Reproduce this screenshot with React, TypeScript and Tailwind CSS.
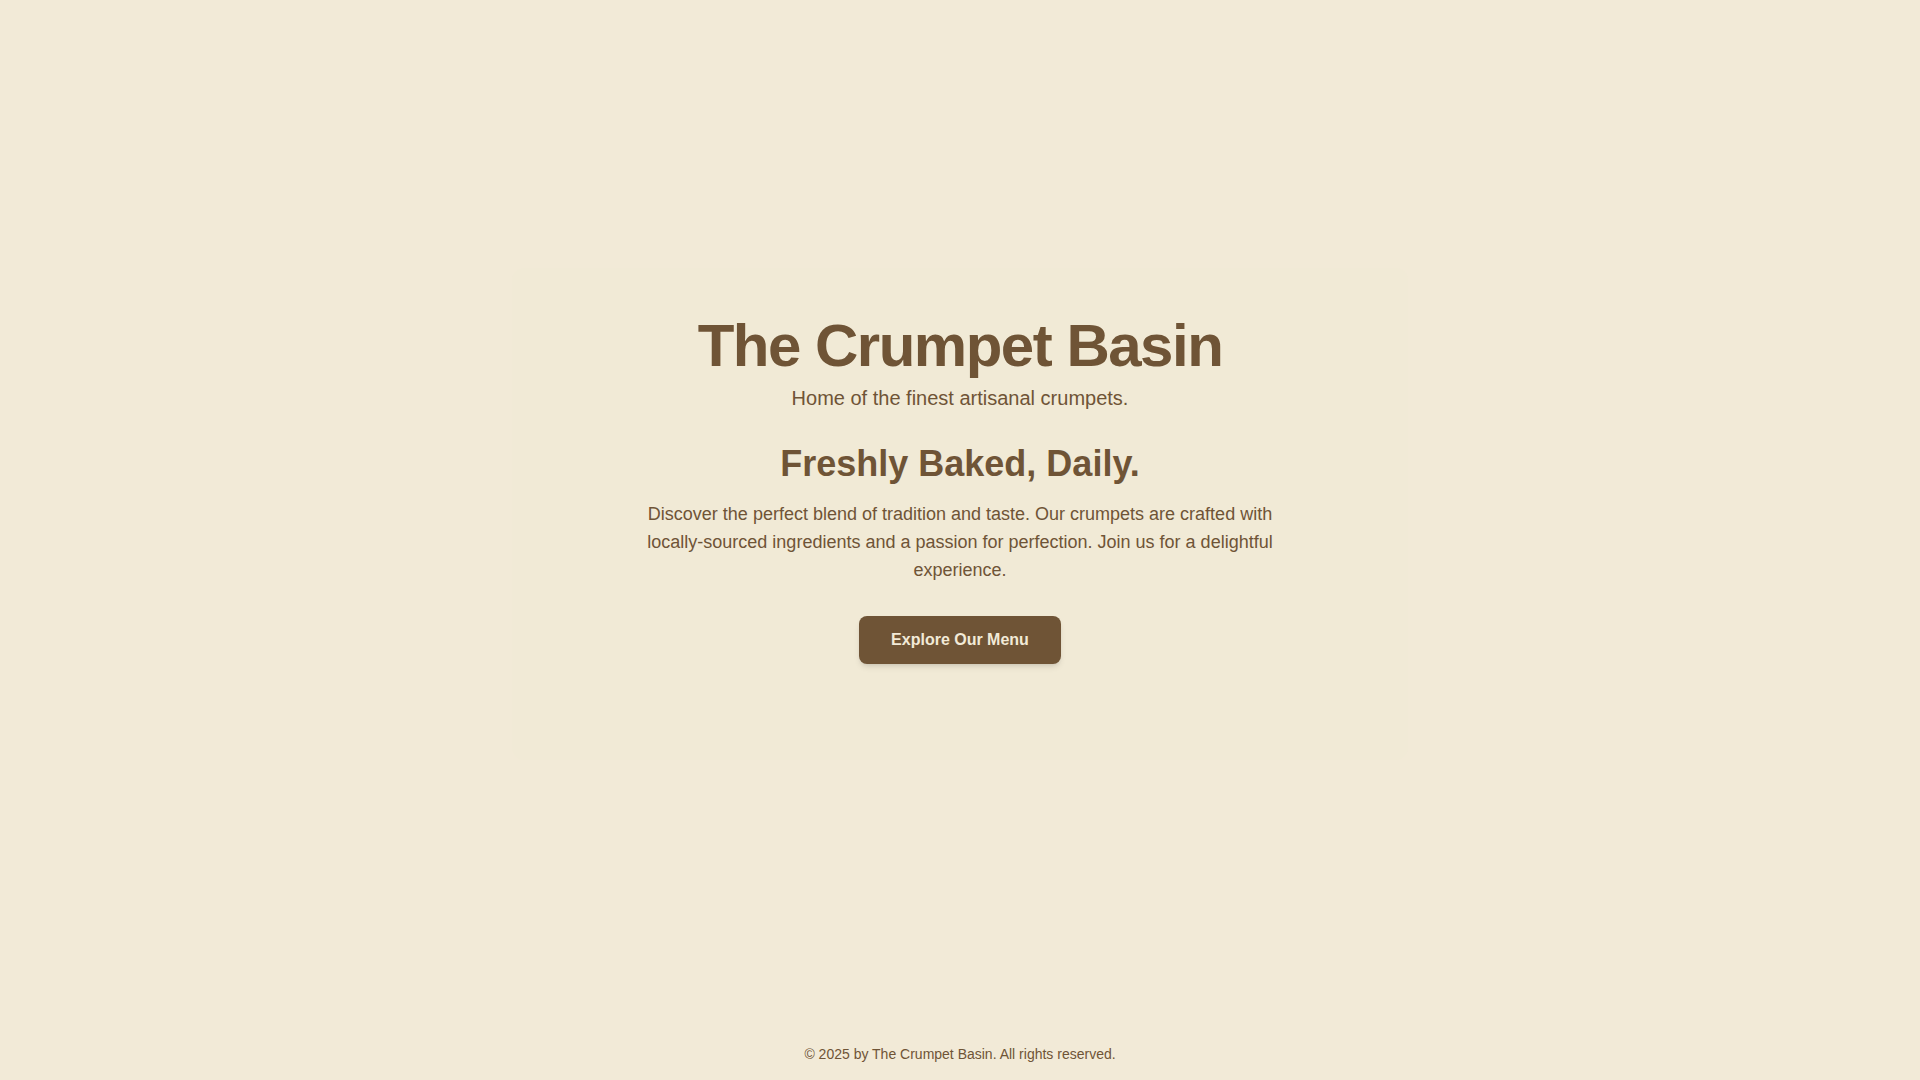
import React from 'react';

const App: React.FC = () => {
  return (
    <div className="min-h-screen flex flex-col items-center bg-[#f2ead7] text-[#6f5436] font-['Liberation_Sans',Arial,sans-serif]">
      <main className="flex-1 w-full flex flex-col items-center justify-center text-center">
        <div className="w-full max-w-4xl p-12 rounded-xl bg-[#f1ead6]">
          <header className="mb-8">
            <h1 className="text-6xl font-bold tracking-tight">The Crumpet Basin</h1>
            <p className="mt-2 text-xl">Home of the finest artisanal crumpets.</p>
          </header>

          <section className="mb-12">
            <h2 className="text-4xl font-bold mb-4">Freshly Baked, Daily.</h2>
            <p className="text-lg leading-7 max-w-2xl mx-auto mb-8">
              Discover the perfect blend of tradition and taste. Our crumpets are crafted with locally-sourced
              ingredients and a passion for perfection. Join us for a delightful experience.
            </p>
            <button
              type="button"
              className="bg-[#6f5436] text-[#f2ead7] font-bold py-3 px-8 rounded-lg shadow-md"
            >
              Explore Our Menu
            </button>
          </section>
        </div>
      </main>

      <footer className="p-4 text-sm">
        <p>© 2025 by The Crumpet Basin. All rights reserved.</p>
      </footer>
    </div>
  );
};

export default App;
